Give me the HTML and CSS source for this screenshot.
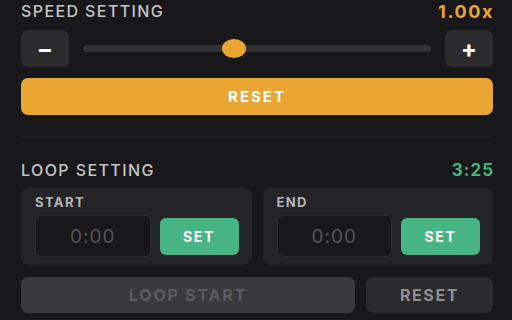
FILE: index.html
```html
<!DOCTYPE html>
<html>
<head>
    <title>Player settings</title>
    <link rel="stylesheet" href="styles.css">
</head>
<body>
    <div class="panel">
        <div class="section-head">
            <span class="section-title">SPEED SETTING</span>
            <span class="speed-value">1.00x</span>
        </div>

        <div class="speed-row">
            <button class="step-btn">&minus;</button>
            <div class="slider">
                <div class="slider-thumb"></div>
            </div>
            <button class="step-btn">+</button>
        </div>

        <button class="speed-reset">RESET</button>

        <div class="divider"></div>

        <div class="section-head loop-head">
            <span class="section-title">LOOP SETTING</span>
            <span class="loop-length">3:25</span>
        </div>

        <div class="loop-cards">
            <div class="loop-card">
                <div class="loop-label">START</div>
                <div class="loop-fields">
                    <input class="time-input" type="text" placeholder="0:00">
                    <button class="set-btn">SET</button>
                </div>
            </div>
            <div class="loop-card">
                <div class="loop-label">END</div>
                <div class="loop-fields">
                    <input class="time-input" type="text" placeholder="0:00">
                    <button class="set-btn">SET</button>
                </div>
            </div>
        </div>

        <div class="loop-actions">
            <button class="loop-start" disabled>LOOP START</button>
            <button class="loop-reset">RESET</button>
        </div>
    </div>
</body>
</html>
```

FILE: styles.css
```css
body {
    margin: 0;
    background: #18181a;
    font-family: Inter, "Liberation Sans", sans-serif;
    color: #c9c9cb;
}
button {
    font-family: inherit;
    border: none;
    cursor: pointer;
}
.panel {
    padding: 0 19px 0 21px;
}
.section-head {
    display: flex;
    justify-content: space-between;
    align-items: center;
    height: 22px;
}
.section-title {
    font-size: 16px;
    font-weight: 500;
    letter-spacing: 1.4px;
    color: #c4c4c6;
}
.speed-value {
    font-size: 18px;
    font-weight: 700;
    letter-spacing: 1.6px;
    margin-right: -1px;
    color: #eaa632;
}
.loop-length {
    font-size: 17px;
    font-weight: 700;
    letter-spacing: 1px;
    margin-right: -1px;
    color: #42b47f;
}
.speed-row {
    display: flex;
    align-items: center;
    gap: 14px;
    margin-top: 8px;
}
.step-btn {
    width: 48px;
    height: 37px;
    border-radius: 6px;
    background: #2b2b2d;
    color: #ffffff;
    font-size: 24px;
    font-weight: 700;
    line-height: 1;
    padding: 0;
}
.slider {
    flex: 1;
    height: 7px;
    border-radius: 4px;
    background: #333335;
    position: relative;
}
.slider-thumb {
    position: absolute;
    left: 139px;
    top: -6px;
    width: 24px;
    height: 19px;
    border-radius: 50%;
    background: #eaa632;
}
.speed-reset {
    display: block;
    width: 100%;
    height: 37px;
    margin-top: 11px;
    border-radius: 7px;
    background: #eaa632;
    color: #ffffff;
    font-size: 15px;
    font-weight: 700;
    letter-spacing: 2px;
}
.divider {
    height: 1px;
    background: #29292b;
    margin-top: 22px;
}
.loop-head {
    margin-top: 21px;
}
.loop-cards {
    display: flex;
    gap: 11px;
    margin-top: 6px;
}
.loop-card {
    flex: 1;
    min-width: 0;
    background: #242426;
    border-radius: 8px;
    padding: 8px 13px 8px 14px;
}
.loop-label {
    height: 14px;
    line-height: 14px;
    font-size: 13px;
    font-weight: 700;
    letter-spacing: 1.4px;
    color: #b4b4b6;
}
.loop-fields {
    display: flex;
    align-items: center;
    gap: 9px;
    margin-top: 6px;
}
.time-input {
    flex: 1;
    width: 0;
    min-width: 0;
    height: 42px;
    box-sizing: border-box;
    background: #18181a;
    border: 1px solid #2e2e30;
    border-radius: 6px;
    color: #d0d0d0;
    font-family: inherit;
    font-size: 19px;
    letter-spacing: 1px;
    text-align: center;
    outline: none;
}
.time-input::placeholder {
    color: #555557;
}
.set-btn {
    width: 79px;
    height: 37px;
    border-radius: 6px;
    background: #46b583;
    color: #ffffff;
    font-size: 14px;
    font-weight: 700;
    letter-spacing: 1.6px;
}
.loop-actions {
    display: flex;
    gap: 11px;
    margin-top: 12px;
}
.loop-start {
    flex: 1;
    height: 36px;
    border-radius: 7px;
    background: #3a3a3c;
    color: #5c5c5e;
    font-size: 16px;
    font-weight: 700;
    letter-spacing: 1.8px;
}
.loop-reset {
    width: 127px;
    height: 36px;
    border-radius: 7px;
    background: #2b2b2d;
    color: #8e8e90;
    font-size: 16px;
    font-weight: 700;
    letter-spacing: 1.6px;
}
```
